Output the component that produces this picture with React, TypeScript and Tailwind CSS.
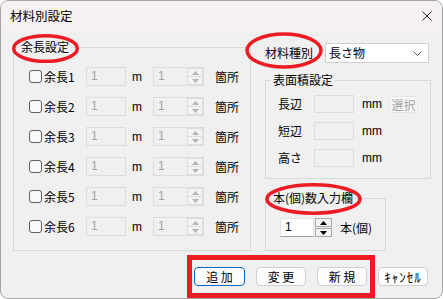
import React from "react";

const F = "font-['Noto_Sans_CJK_JP',sans-serif]";

function Tri({ up, color }: { up: boolean; color: string }) {
  return (
    <svg width="7" height="4" viewBox="0 0 7 4">
      <path d={up ? "M0 4 L3.5 0 L7 4Z" : "M0 0 L3.5 4 L7 0Z"} fill={color} />
    </svg>
  );
}

function DisabledSpinner() {
  return (
    <div className="flex w-[51px] h-[19px] border border-[#dcdcdc] bg-[#f0f0f0]">
      <div className="flex-1 pl-[4px] text-[12px] leading-[17px] text-[#a3a3a3] font-['Liberation_Sans',sans-serif]">1</div>
      <div className="flex flex-col w-[16px] h-full">
        <div className="flex-1 flex items-center justify-center border border-[#dedede] bg-[#f3f3f3]">
          <Tri up color="#b4b4b4" />
        </div>
        <div className="flex-1 flex items-center justify-center border border-t-0 border-[#dedede] bg-[#f3f3f3]">
          <Tri up={false} color="#b4b4b4" />
        </div>
      </div>
    </div>
  );
}

function EnabledSpinner() {
  return (
    <div className="flex w-[52px] h-[19px]">
      <div className="w-[34px] h-full bg-white border border-[#e2e2e2] border-b-[#a0a0a0] pl-[4px] text-[12px] leading-[17px] text-black font-['Liberation_Sans',sans-serif]">1</div>
      <div className="flex flex-col w-[18px] h-full gap-[1px] pl-[1px]">
        <div className="flex-1 flex items-center justify-center border border-[#a8a8a8] bg-[#f4f4f4]">
          <Tri up color="#000" />
        </div>
        <div className="flex-1 flex items-center justify-center border border-[#a8a8a8] bg-[#f4f4f4]">
          <Tri up={false} color="#000" />
        </div>
      </div>
    </div>
  );
}

function Legend({ children }: { children: React.ReactNode }) {
  return <legend className="ml-[5px] px-[2px] text-[12px] leading-[16px] text-black">{children}</legend>;
}

function SurfaceRow({ label, button }: { label: string; button?: boolean }) {
  return (
    <div className="flex items-center h-[18px]">
      <div className="w-[36px] text-[12px] leading-[18px]">{label}</div>
      <div className="w-[40px] h-[18px] border border-[#dcdcdc] bg-[#f0f0f0]" />
      <div className="w-[35px] pl-[8px] text-[12px] leading-[18px] font-['Liberation_Sans',sans-serif]">mm</div>
      {button && (
        <div className="w-[29px] h-[17px] rounded-[3px] border border-[#e6e6e6] bg-[#f7f7f7] text-[#a3a3a3] text-[12px] leading-[15px] text-center">
          選択
        </div>
      )}
    </div>
  );
}

function Btn({ children, def, wide }: { children: React.ReactNode; def?: boolean; wide?: boolean }) {
  return (
    <div
      className={
        "h-[19px] rounded-[4px] bg-[#fdfdfd] flex items-center justify-center text-[12px] leading-[17px] text-black " +
        (def ? "border-[1.5px] border-[#0067c0] " : "border border-[#d0d0d0] ") +
        (wide ? "w-[51px]" : "w-[50px]")
      }
    >
      {children}
    </div>
  );
}

export default function App() {
  return (
    <div className={"relative w-[443px] h-[299px] bg-white text-black " + F}>
      <div className="w-full h-full rounded-[8px] border border-[#a6a6a6] overflow-hidden flex flex-col bg-[#f0f0f0]">
        {/* Title bar */}
        <div className="h-[30px] flex items-center justify-between bg-[#f6eff4] pl-[9px] pr-[10px] shrink-0">
          <span className="text-[12.5px] leading-[16px]">材料別設定</span>
          <svg width="10" height="10" viewBox="0 0 10 10">
            <path d="M0.5 0.5 L9.5 9.5 M9.5 0.5 L0.5 9.5" stroke="#222" strokeWidth="1" />
          </svg>
        </div>

        {/* Body */}
        <div className="flex-1 flex flex-col pl-[12px] pt-[8px]">
          <div className="flex items-start gap-[14px]">
            {/* Left group */}
            <fieldset className="w-[238px] h-[212px] border border-[#d9d9d9] p-0 m-0">
              <Legend>余長設定</Legend>
              <div className="flex flex-col gap-[11px] pl-[15px] pt-[12px]">
                {[1, 2, 3, 4, 5, 6].map((n) => (
                  <div key={n} className="flex items-center h-[19px]">
                    <div className="flex items-center w-[57px]">
                      <div className="w-[13px] h-[13px] border border-[#5f5f5f] rounded-[3px] bg-[#f9f9f9]" />
                      <span className="ml-[2px] text-[12px] leading-[16px]">余長{n}</span>
                    </div>
                    <div className="w-[40px] h-[19px] border border-[#dcdcdc] bg-[#f0f0f0] text-[#a3a3a3] pl-[4px] text-[12px] leading-[17px] font-['Liberation_Sans',sans-serif]">
                      1
                    </div>
                    <div className="w-[27px] pl-[6px] text-[12px] leading-[16px] font-['Liberation_Sans',sans-serif]">m</div>
                    <DisabledSpinner />
                    <span className="ml-[11px] text-[12px] leading-[16px]">箇所</span>
                  </div>
                ))}
              </div>
            </fieldset>

            {/* Right column */}
            <div className="flex flex-col pt-[4px]">
              <div className="flex items-center h-[20px]">
                <span className="w-[60px] text-[12px] leading-[16px]">材料種別</span>
                <div className="w-[104px] h-[20px] bg-white border border-[#d0d0d0] flex items-center justify-between pl-[3px] pr-[6px]">
                  <span className="text-[12px] leading-[16px]">長さ物</span>
                  <svg width="9" height="5" viewBox="0 0 9 5">
                    <path d="M0.5 0.5 L4.5 4.5 L8.5 0.5" stroke="#555" strokeWidth="1" fill="none" />
                  </svg>
                </div>
              </div>

              <fieldset className="mt-[9px] w-[166px] h-[107px] border border-[#d9d9d9] p-0 m-0">
                <Legend>表面積設定</Legend>
                <div className="flex flex-col gap-[9px] pl-[12px] pt-[7px]">
                  <SurfaceRow label="長辺" button />
                  <SurfaceRow label="短辺" />
                  <SurfaceRow label="高さ" />
                </div>
              </fieldset>

              <fieldset className="mt-[11px] w-[121px] h-[61px] border border-[#d9d9d9] p-0 m-0">
                <Legend>本(個)数入力欄</Legend>
                <div className="flex items-center pl-[14px] pt-[12px]">
                  <EnabledSpinner />
                  <span className="ml-[8px] text-[12px] leading-[16px]">本(個)</span>
                </div>
              </fieldset>
            </div>
          </div>

          {/* Buttons */}
          <div className="flex justify-end gap-[11px] pr-[14px] mt-[16px]">
            <Btn def wide>追 加</Btn>
            <Btn>変 更</Btn>
            <Btn>新 規</Btn>
            <Btn>
              <span className="text-[13px] tracking-[1px]">ｷｬﾝｾﾙ</span>
            </Btn>
          </div>
        </div>
      </div>

      {/* Red annotations */}
      <svg className="absolute inset-0 pointer-events-none" width="443" height="299" viewBox="0 0 443 299">
        <ellipse cx="45.5" cy="48.5" rx="31.8" ry="12.8" fill="none" stroke="#ed1c24" strokeWidth="3.5" />
        <ellipse cx="284" cy="50.5" rx="37" ry="16.5" fill="none" stroke="#ed1c24" strokeWidth="3.5" />
        <ellipse cx="313.5" cy="199" rx="46.5" ry="14.2" fill="none" stroke="#ed1c24" strokeWidth="3.5" />
        <rect x="189.5" y="257.5" width="183" height="38" fill="none" stroke="#ed1c24" strokeWidth="5" />
      </svg>
    </div>
  );
}
